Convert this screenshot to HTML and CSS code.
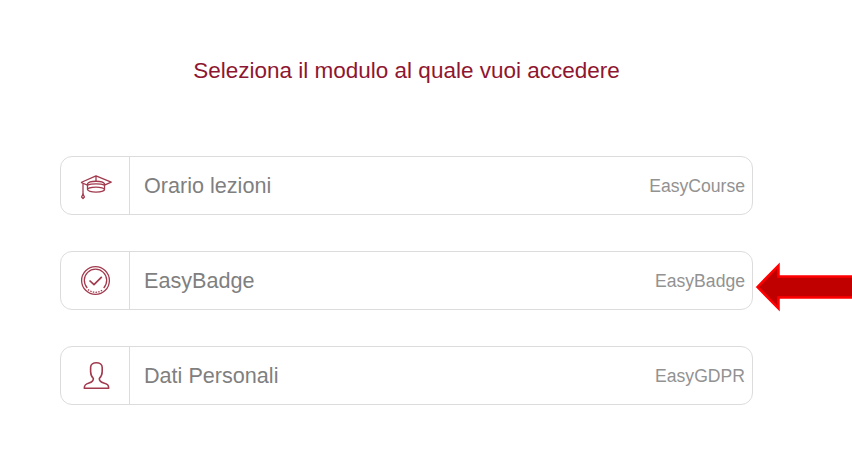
FILE: index.html
```html
<!DOCTYPE html>
<html lang="it">
<head>
    <meta charset="utf-8">
    <title>Selezione modulo</title>
    <link rel="stylesheet" href="styles.css">
</head>
<body>
<div class="container">
    <h1>Seleziona il modulo al quale vuoi accedere</h1>

    <a class="module">
        <span class="module-icon">
            <svg width="36" height="36" viewBox="0 0 36 36">
                <path d="M3 14.5 L18 7.8 L33.2 14.2 L26.5 17.2 M9.5 17.2 L3 14.5 M18 7.8 V13"/>
                <path d="M9.5 21.5 V15.8 C11 12.4 25 12.4 26.5 15.8 V21.5"/>
                <ellipse cx="18" cy="21.6" rx="8.5" ry="2.5"/>
                <path d="M9.5 17.2 C13 15.4 23 15.4 26.5 17.2"/>
                <path d="M5 15.5 V26"/>
                <path d="M5 26 L3.6 29 L5 30.5 L6.4 29 Z"/>
            </svg>
        </span>
        <span class="module-name">Orario lezioni</span>
        <span class="module-app">EasyCourse</span>
    </a>

    <a class="module">
        <span class="module-icon">
            <svg width="36" height="36" viewBox="0 0 36 36">
                <circle cx="17.5" cy="17.5" r="13.9"/>
                <path d="M9.3 25 A11.2 11.2 0 1 1 25.7 25"/>
                <path class="dots" d="M10 26.5 A11.5 11.5 0 0 0 25 26.5"/>
                <path class="check" d="M11.5 17.5 L16 21.7 L23.8 13.8"/>
            </svg>
        </span>
        <span class="module-name">EasyBadge</span>
        <span class="module-app">EasyBadge</span>
    </a>

    <a class="module">
        <span class="module-icon">
            <svg width="36" height="36" viewBox="0 0 36 36">
                <path class="user" d="M6.3 30.3 C6.3 27 7.5 26 11 25 C14 24.2 15.4 23 15.4 20.5 C13.4 18.5 12.6 16 12.6 13.5 V9.5 C12.6 3.2 24.2 3.2 24.2 9.5 V13.5 C24.2 16 23.3 18.5 21.3 20.5 C21.3 23 22.7 24.2 25.7 25 C29.5 26 30.7 27 30.7 30.3 Z"/>
            </svg>
        </span>
        <span class="module-name">Dati Personali</span>
        <span class="module-app">EasyGDPR</span>
    </a>
</div>

<svg class="arrow" width="97" height="50" viewBox="0 0 97 50">
    <path d="M2.5 25 L23.5 3.5 V14.5 H110 V35.5 H23.5 V46.5 Z"/>
</svg>
</body>
</html>
```
FILE: styles.css
```css
body {
    font-family: Arial, "Liberation Sans", sans-serif;
    background-color: #fff;
    margin: 0;
    padding: 0;
    overflow: hidden;
}

.container {
    width: 693px;
    margin-left: 60px;
    padding-top: 58px;
}

h1 {
    margin: 0 0 72px;
    color: #8f1630;
    font-size: 22.5px;
    font-weight: normal;
    line-height: 26px;
    text-align: center;
}

.module {
    display: flex;
    align-items: center;
    box-sizing: border-box;
    height: 59px;
    margin-bottom: 36px;
    padding-right: 7px;
    border: 1px solid #dcdcdc;
    border-radius: 12px;
}

.module-icon {
    display: flex;
    align-items: center;
    justify-content: center;
    box-sizing: border-box;
    width: 69px;
    height: 100%;
    padding-left: 2px;
    border-right: 1px solid #dcdcdc;
}

.module-icon svg {
    fill: none;
    stroke: #a23a4e;
    stroke-width: 1.3;
    stroke-linejoin: round;
}

.module-icon .dots {
    stroke-dasharray: 1.5 1.2;
}

.module-icon .check {
    stroke-width: 1.7;
}

.module-icon .user {
    stroke-width: 1.6;
}

.module-name {
    flex: 1;
    padding-left: 14px;
    color: #7f7f7f;
    font-size: 21.6px;
}

.module-app {
    padding-top: 2px;
    color: #929292;
    font-size: 17.6px;
}

/* callout on the EasyBadge row */
.arrow {
    position: absolute;
    top: 262px;
    right: 0;
    fill: #c00000;
    stroke: #ff0000;
    stroke-width: 2.5;
}
```
